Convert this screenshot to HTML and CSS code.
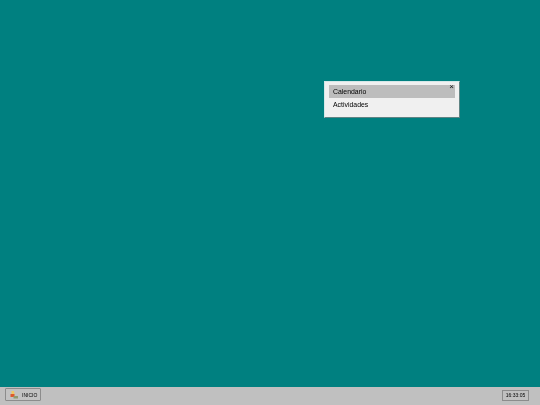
FILE: index.html
```html
<!DOCTYPE html>
<html lang="es">
<head>
<meta charset="utf-8">
<title>Escritorio</title>
<link rel="stylesheet" href="styles.css">
</head>
<body>
<main class="desktop">
  <section class="window">
    <span class="close">&#215;</span>
    <ul class="menu">
      <li class="item selected">Calendario</li>
      <li class="item">Actividades</li>
    </ul>
  </section>
</main>
<footer class="taskbar">
  <button class="start">
    <svg class="start-icon" viewBox="0 0 8 8" width="8" height="8" aria-hidden="true">
      <path d="M1.5 0 L4 0 L4.5 3.5 L1.5 3.5 Z" fill="#efc862"/>
      <path d="M0.5 3 L4.5 3 L4.5 6 L0.5 6 Z" fill="#dd5a2c"/>
      <path d="M3.5 5 L8 5 L8 7.5 L3.5 7.5 Z" fill="#8f9a6e"/>
    </svg>
    <span>INICIO</span>
  </button>
  <div class="clock">16:33:05</div>
</footer>
</body>
</html>
```
FILE: styles.css
```css
html, body {
  margin: 0;
  height: 100%;
}
body {
  display: flex;
  flex-direction: column;
  width: 540px;
  height: 405px;
  overflow: hidden;
  font-family: "Liberation Sans", Arial, sans-serif;
  font-size: 6.9px;
  color: #000;
}
.desktop {
  flex: 1;
  position: relative;
  background: #008080;
}
.window {
  position: absolute;
  left: 324px;
  top: 81px;
  width: 136px;
  height: 37px;
  box-sizing: border-box;
  padding: 3px 4px 0 4px;
  background: #f0f0f0;
  border: 1px solid;
  border-color: #d4e8e8 #5f8484 #5f8484 #d4e8e8;
  filter: blur(0.35px);
}
.close {
  position: absolute;
  right: 5px;
  top: 0;
  font-size: 8px;
  line-height: 9px;
  color: #111;
}
.menu {
  list-style: none;
  margin: 0;
  padding: 0;
  display: flex;
  flex-direction: column;
}
.item {
  height: 13px;
  line-height: 13px;
  padding-left: 4px;
}
.selected {
  background: #bdbdbd;
}
.taskbar {
  height: 18px;
  flex: none;
  display: flex;
  align-items: flex-start;
  justify-content: space-between;
  padding: 1px 11px 0 5px;
  box-sizing: border-box;
  background: #c0c0c0;
}
.start {
  display: flex;
  align-items: center;
  gap: 4px;
  width: 36px;
  height: 13px;
  box-sizing: border-box;
  margin: 0;
  padding: 0 0 0 4px;
  background: #c2c2c2;
  border: 1px solid #8c8c8c;
  border-radius: 1px;
  font: inherit;
  font-size: 5px;
  color: #000;
  filter: blur(0.35px);
}
.start-icon {
  flex: none;
}
.clock {
  width: 27px;
  height: 11px;
  margin-top: 2px;
  box-sizing: border-box;
  line-height: 9px;
  text-align: center;
  font-size: 5px;
  color: #000;
  border: 1px solid #8c8c8c;
  filter: blur(0.35px);
}
```
